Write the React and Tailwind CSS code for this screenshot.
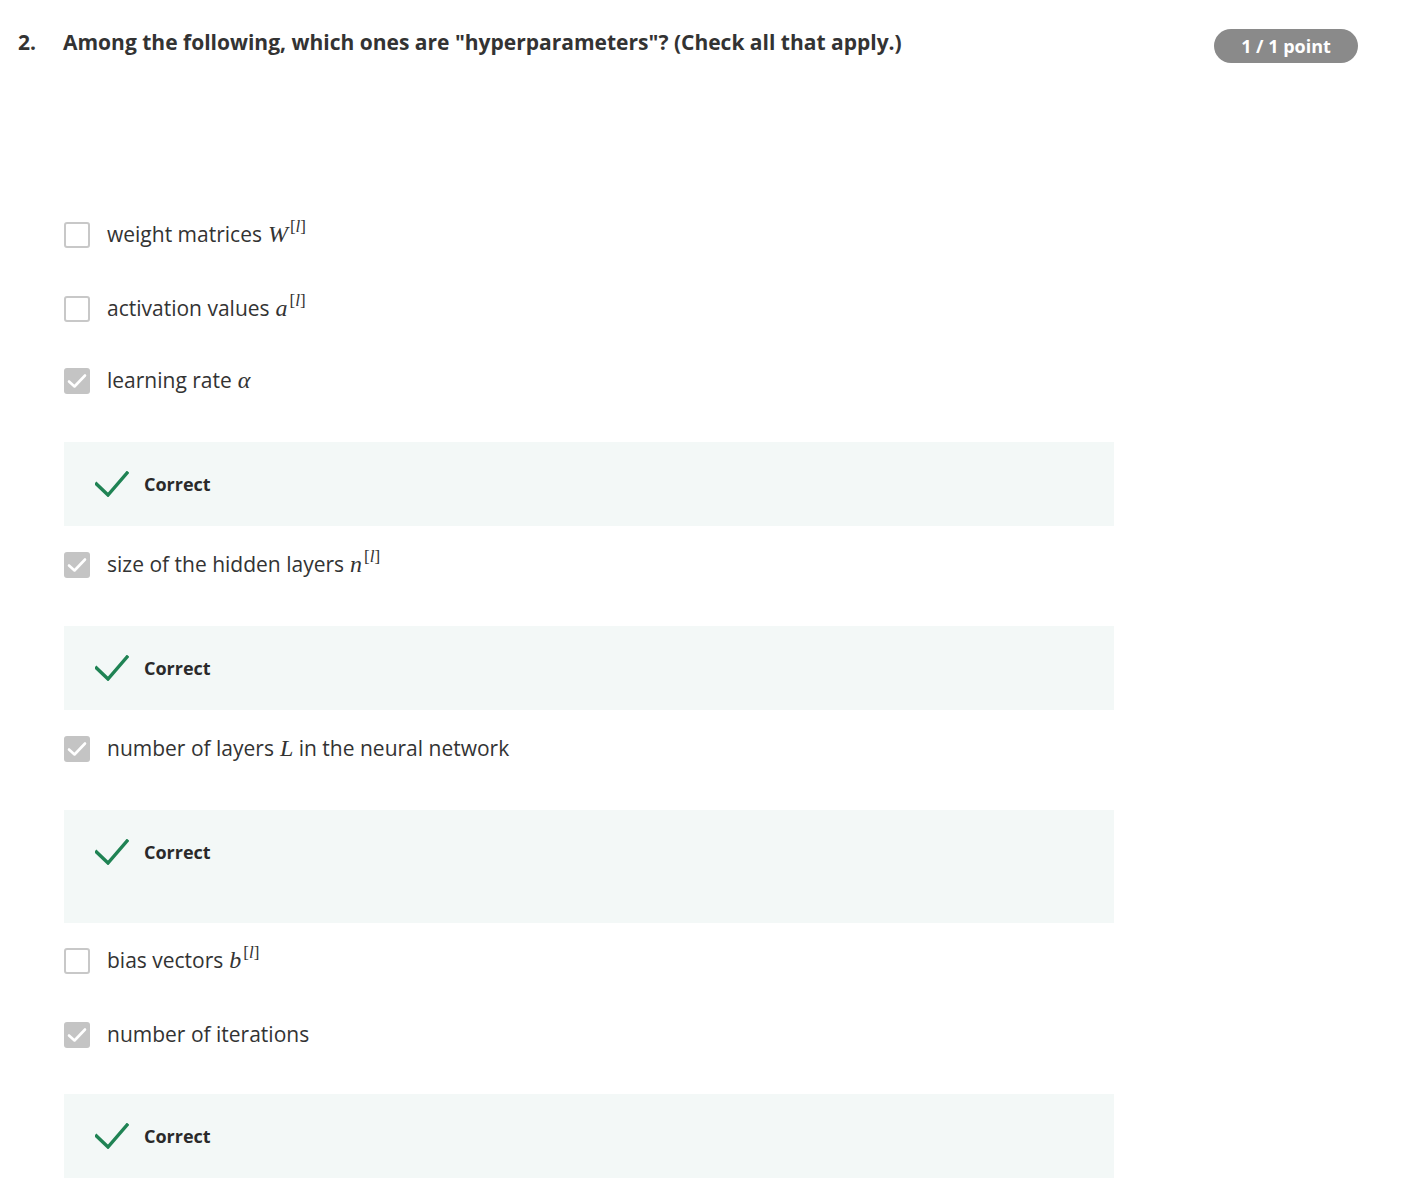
import React from 'react';

const Math = ({ children, sup }) => (
  <span className="ml-[6px] font-['Liberation_Serif',serif] text-[24px] leading-none">
    <span className="italic">{children}</span>
    {sup && (
      <sup className="relative -top-[10px] ml-[2px] text-[17px] leading-none">
        [<span className="italic">l</span>]
      </sup>
    )}
  </span>
);

const Checkbox = ({ checked }) =>
  checked ? (
    <div className="flex h-[26px] w-[26px] shrink-0 items-center justify-center rounded-[3px] bg-[#c4c4c4]">
      <svg width="20" height="16" viewBox="0 0 20 16" fill="none">
        <path d="M2 8.5 L7.5 13.5 L18 2.5" stroke="#ffffff" strokeWidth="2.6" strokeLinecap="round" strokeLinejoin="round" />
      </svg>
    </div>
  ) : (
    <div className="h-[26px] w-[26px] shrink-0 rounded-[3px] border-2 border-[#c8c8c8] bg-white" />
  );

const Option = ({ checked, children, className = '' }) => (
  <div className={`flex h-7 items-center gap-[17px] ${className}`}>
    <Checkbox checked={checked} />
    <span className="-mt-[2px] text-[21px] leading-7 text-[#333333]">{children}</span>
  </div>
);

const Correct = ({ className = '' }) => (
  <div className={`w-[1050px] bg-[#f3f8f7] pl-[31px] pt-[30px] ${className}`}>
    <div className="flex h-6 items-center gap-[15px]">
      <svg width="34" height="26" viewBox="0 0 34 26" fill="none">
        <path d="M1.5 13 L13 24 L32 2" stroke="#1f8354" strokeWidth="3.4" strokeLinecap="square" />
      </svg>
      <span className="text-[18px] font-bold leading-6 text-[#2a2a2a]">Correct</span>
    </div>
  </div>
);

export default function App() {
  return (
    <div className="min-h-screen bg-white pl-[18px] pr-[66px] pt-[28px] font-['Open_Sans',sans-serif] text-[#333333]">
      {/* Question header */}
      <div className="flex items-start">
        <span className="w-[45px] shrink-0 text-[21px] font-bold leading-7">2.</span>
        <h2 className="flex-1 text-[21px] font-bold leading-7">
          Among the following, which ones are "hyperparameters"? (Check all that apply.)
        </h2>
        <span className="mt-[1px] flex h-[34px] w-[144px] items-center justify-center rounded-full bg-[#8a8a8a] text-[18px] font-bold text-white">
          1 / 1 point
        </span>
      </div>

      {/* Options */}
      <div className="ml-[46px] mt-[158px] flex flex-col pb-6">
        <Option>
          weight matrices<Math sup>W</Math>
        </Option>
        <Option className="mt-[46px]">
          activation values<Math sup>a</Math>
        </Option>
        <Option checked className="mt-[44px]">
          learning rate<Math>α</Math>
        </Option>
        <Correct className="mt-[47px] h-[84px]" />
        <Option checked className="mt-[25px]">
          size of the hidden layers<Math sup>n</Math>
        </Option>
        <Correct className="mt-[47px] h-[84px]" />
        <Option checked className="mt-[25px]">
          number of layers<Math>L</Math> in the neural network
        </Option>
        <Correct className="mt-[47px] h-[113px]" />
        <Option className="mt-[24px]">
          bias vectors<Math sup>b</Math>
        </Option>
        <Option checked className="mt-[46px]">
          number of iterations
        </Option>
        <Correct className="mt-[45px] h-[84px]" />
      </div>
    </div>
  );
}
